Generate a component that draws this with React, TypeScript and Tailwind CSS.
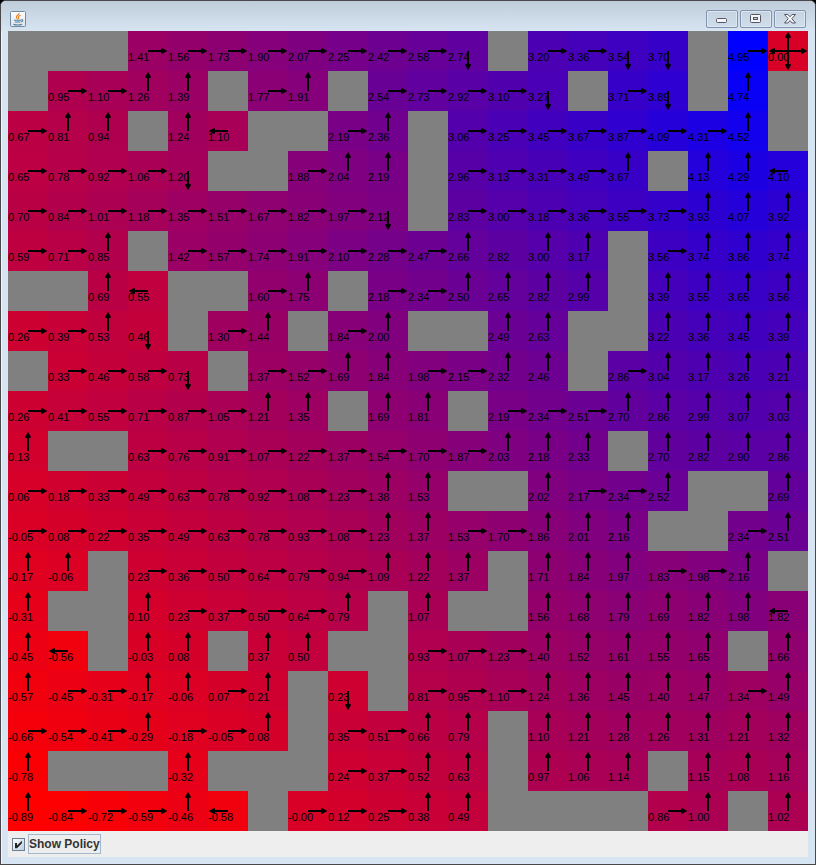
import { useState } from "react";

type Direction = "^" | "v" | "<" | ">";

// One string per row. "#" is a wall; any other token is the state's value
// followed by the directions of its best actions.
const GRID = [
  "# # # 1.41> 1.56> 1.73> 1.90> 2.07> 2.25> 2.42> 2.58> 2.74v # 3.20> 3.36> 3.54v 3.70v # 4.95> 0.00^v<>",
  "# 0.95> 1.10> 1.26^ 1.39^ # 1.77> 1.91^ # 2.54> 2.73> 2.92> 3.10> 3.27v # 3.71> 3.89v # 4.74^ #",
  "0.67> 0.81^ 0.94^ # 1.24^ 1.10< # # 2.19> 2.36^ # 3.06> 3.25> 3.45> 3.67> 3.87> 4.09> 4.31> 4.52^ #",
  "0.65> 0.78> 0.92> 1.06> 1.20v # # 1.88> 2.04^ 2.19^ # 2.96> 3.13> 3.31> 3.49> 3.67^ # 4.13^ 4.29^ 4.10<",
  "0.70> 0.84> 1.01> 1.18> 1.35> 1.51> 1.67> 1.82> 1.97> 2.12v # 2.83> 3.00> 3.18> 3.36> 3.55> 3.73> 3.93^ 4.07^ 3.92^",
  "0.59> 0.71> 0.85^ # 1.42> 1.57> 1.74> 1.91> 2.10> 2.28> 2.47> 2.66^ 2.82 3.00^ 3.17^ # 3.56> 3.74^ 3.86^ 3.74^",
  "# # 0.69^ 0.55< # # 1.60> 1.75^ # 2.18> 2.34> 2.50^ 2.65^ 2.82^ 2.99^ # 3.39^ 3.55^ 3.65^ 3.56^",
  "0.26> 0.39> 0.53^ 0.46v # 1.30> 1.44^ # 1.84> 2.00^ # # 2.49^ 2.63^ # # 3.22^ 3.36^ 3.45^ 3.39^",
  "# 0.33> 0.46> 0.58> 0.73v # 1.37> 1.52> 1.69^ 1.84^ 1.98> 2.15> 2.32^ 2.46^ # 2.86> 3.04^ 3.17^ 3.26^ 3.21^",
  "0.26> 0.41> 0.55> 0.71> 0.87> 1.05> 1.21^ 1.35^ # 1.69^ 1.81^ # 2.19> 2.34> 2.51> 2.70^ 2.86^ 2.99^ 3.07^ 3.03^",
  "0.13^ # # 0.63> 0.76> 0.91> 1.07> 1.22> 1.37> 1.54> 1.70> 1.87> 2.03^ 2.18^ 2.33^ # 2.70^ 2.82^ 2.90^ 2.86^",
  "0.06> 0.18> 0.33> 0.49> 0.63> 0.78> 0.92> 1.08> 1.23> 1.38^ 1.53^ # # 2.02^ 2.17> 2.34> 2.52^ # # 2.69^",
  "-0.05> 0.08> 0.22> 0.35> 0.49> 0.63> 0.78> 0.93> 1.08> 1.23^ 1.37^ 1.53> 1.70> 1.86^ 2.01^ 2.16^ # # 2.34> 2.51^",
  "-0.17^ -0.06^ # 0.23> 0.36> 0.50> 0.64> 0.79> 0.94> 1.09^ 1.22^ 1.37^ # 1.71^ 1.84^ 1.97^ 1.83> 1.98> 2.16^ #",
  "-0.31^ # # 0.10^ 0.23> 0.37> 0.50> 0.64> 0.79^ # 1.07^ # # 1.56^ 1.68^ 1.79^ 1.69^ 1.82^ 1.98^ 1.82<",
  "-0.45^ -0.56< # -0.03^ 0.08^ # 0.37^ 0.50^ # # 0.93> 1.07> 1.23> 1.40^ 1.52^ 1.61^ 1.55^ 1.65^ # 1.66^",
  "-0.57^ -0.45> -0.31> -0.17^ -0.06^ 0.07> 0.21^ # 0.23v # 0.81> 0.95> 1.10> 1.24^ 1.36^ 1.45^ 1.40^ 1.47^ 1.34> 1.49^",
  "-0.66> -0.54> -0.41> -0.29^ -0.18> -0.05> 0.08^ # 0.35> 0.51> 0.66^ 0.79^ # 1.10^ 1.21^ 1.28^ 1.26^ 1.31^ 1.21^ 1.32^",
  "-0.78^ # # # -0.32^ # # # 0.24> 0.37> 0.52^ 0.63^ # 0.97^ 1.06^ 1.14^ # 1.15^ 1.08^ 1.16^",
  "-0.89^ -0.84> -0.72> -0.59> -0.46^ -0.58< # -0.00> 0.12> 0.25> 0.38^ 0.49^ # # # # 0.86> 1.00^ # 1.02^",
].map((row) => row.split(" "));

const MIN_VALUE = -0.89;
const MAX_VALUE = 4.95;

const ROTATION: Record<Direction, number> = { ">": 0, v: 90, "<": 180, "^": 270 };

// Blends from red at the lowest value to blue at the highest.
function valueColor(value: number) {
  const blue = Math.round((255 * (value - MIN_VALUE)) / (MAX_VALUE - MIN_VALUE));
  return `rgb(${255 - blue}, 0, ${blue})`;
}

function Cell({ token, showPolicy }: { token: string; showPolicy: boolean }) {
  if (token === "#") {
    return <td className="h-10 bg-[#808080] p-0" />;
  }
  const text = token.replace(/[<>^v]/g, "");
  const directions = (token.match(/[<>^v]/g) ?? []) as Direction[];
  return (
    <td
      className="relative h-10 p-0 pt-5 align-top text-[11px] leading-[12px] whitespace-nowrap text-black"
      style={{ backgroundColor: valueColor(Number(text)) }}
    >
      {text}
      {showPolicy && (
        <svg
          viewBox="0 0 40 40"
          className="absolute inset-0 size-full"
          shapeRendering="crispEdges"
          aria-hidden="true"
        >
          {directions.map((direction) => (
            <g key={direction} transform={`rotate(${ROTATION[direction]} 20 20)`}>
              <path d="M20 19h17v2H20z" />
              <path d="M33 17.3h1.5L39.3 20l-4.8 2.7H33z" shapeRendering="auto" />
            </g>
          ))}
        </svg>
      )}
    </td>
  );
}

function JavaIcon() {
  return (
    <svg viewBox="0 0 16 16" className="size-4" aria-hidden="true">
      <defs>
        <linearGradient id="tile" x1="0" y1="0" x2="0" y2="1">
          <stop offset="0" stopColor="#ffffff" />
          <stop offset="1" stopColor="#dbe2ea" />
        </linearGradient>
      </defs>
      <rect x="0.5" y="0.5" width="15" height="15" rx="1" fill="url(#tile)" stroke="#6f8ba6" />
      <path
        d="M9.2 1.8C9.6 3.6 6 4.4 6.4 6.2c.1.8.8 1.3 1.2 2M10.6 4.2C8.8 4.8 8 5.6 8.6 6.6c.3.6.2 1-.2 1.5"
        fill="none"
        stroke="#e8821e"
        strokeWidth="1.1"
      />
      <path
        d="M4 9.2h7M5 11h5.4M3.4 13.2c2.4.9 6.4.9 8.6 0M11 9c2-.8 2.8 1 .2 2"
        fill="none"
        stroke="#4f7f9f"
        strokeWidth="1.1"
      />
    </svg>
  );
}

const CAPTION_BUTTON =
  "flex h-[18px] w-8 items-center justify-center rounded-[2px] border border-[#8193ae] bg-linear-to-b from-[#c5d2e0] to-[#d0deeb] shadow-[inset_0_0_0_1px_#dce7f2]";

function TitleBar() {
  return (
    <header className="flex h-[30px] items-center justify-between bg-linear-to-b from-[#bfccda] to-[#d7e4f1] pt-1.5 pr-[9px] pl-[9px]">
      <JavaIcon />
      <div className="flex gap-0.5">
        <button type="button" aria-label="Minimize" className={CAPTION_BUTTON}>
          <svg viewBox="0 0 30 16" className="h-4 w-[30px]" aria-hidden="true">
            <rect x="9.5" y="7.5" width="10" height="4" rx="1" fill="#f6f6f6" stroke="#535666" />
          </svg>
        </button>
        <button type="button" aria-label="Maximize" className={CAPTION_BUTTON}>
          <svg viewBox="0 0 30 16" className="h-4 w-[30px]" aria-hidden="true">
            <rect x="9.5" y="3.5" width="10" height="8" rx="1" fill="#f6f6f6" stroke="#535666" />
            <rect x="12.5" y="6.5" width="4" height="2" fill="#c5d2e0" stroke="#535666" />
          </svg>
        </button>
        <button type="button" aria-label="Close" className={CAPTION_BUTTON}>
          <svg viewBox="0 0 30 16" className="h-4 w-[30px]" aria-hidden="true">
            <path
              d="M9.5 3.5h3.4L15 5.8l2.1-2.3h3.4l-3.7 4.2 3.7 4.3h-3.4L15 9.6 12.9 12H9.5l3.7-4.3z"
              fill="#f6f6f6"
              stroke="#535666"
              strokeLinejoin="round"
            />
          </svg>
        </button>
      </div>
    </header>
  );
}

export default function App() {
  const [showPolicy, setShowPolicy] = useState(true);

  return (
    <div className="bg-black font-['Liberation_Sans',Arial,sans-serif]">
      <main className="overflow-hidden rounded-t-[6px] border border-[#4a484c] bg-[#d7e4f1] shadow-[inset_1px_1px_0_#f4f8fc]">
        <TitleBar />
        <div className="px-[7px] pb-[7px]">
          <table className="w-full table-fixed border-collapse">
            <tbody>
              {GRID.map((row, y) => (
                <tr key={y}>
                  {row.map((token, x) => (
                    <Cell key={x} token={token} showPolicy={showPolicy} />
                  ))}
                </tr>
              ))}
            </tbody>
          </table>
          <div className="flex h-[26px] items-center bg-[#eeeeee] pl-1">
            <label className="flex items-center gap-[3px]">
              <span className="grid size-[13px] place-items-center">
                <input
                  type="checkbox"
                  checked={showPolicy}
                  onChange={(event) => setShowPolicy(event.target.checked)}
                  className="peer size-[13px] appearance-none border border-[#6f7f92] bg-linear-to-br from-white to-[#b8cfe5] outline-none [grid-area:1/1]"
                />
                <svg
                  viewBox="0 0 13 13"
                  className="pointer-events-none invisible size-[13px] [grid-area:1/1] peer-checked:visible"
                  aria-hidden="true"
                >
                  <path d="M3 5h2v2.4l4.9-4.6v2.4L5 10.2H3z" fill="#222222" />
                </svg>
              </span>
              <span className="border border-[#a3b8cc] text-[12px] leading-[18px] font-bold text-[#333333]">
                Show Policy
              </span>
            </label>
          </div>
        </div>
      </main>
    </div>
  );
}
